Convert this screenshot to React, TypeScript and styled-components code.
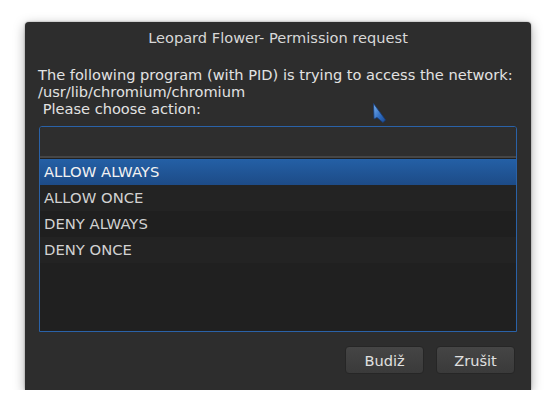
import React from "react";
import styled, { createGlobalStyle } from "styled-components";

const GlobalStyle = createGlobalStyle`
  html, body { margin: 0; padding: 0; background: #ffffff; }
  body { font-family: "DejaVu Sans", "Liberation Sans", sans-serif; }
`;

const Page = styled.div`
  padding: 22px 0 0 25px;
  position: relative;
`;

const Dialog = styled.div`
  width: 506px;
  height: 368px;
  box-sizing: border-box;
  background: #2d2d2d;
  border-radius: 4px 4px 0 0;
  box-shadow: 0 3px 12px rgba(0, 0, 0, 0.35), 0 0 2px rgba(0, 0, 0, 0.4);
  display: flex;
  flex-direction: column;
  font-size: 14.6px;
  color: #dedede;
`;

const Title = styled.div`
  text-align: center;
  line-height: 18px;
  padding-top: 7px;
  color: #d8d8d8;
`;

const Message = styled.div`
  margin-top: 19px;
  padding: 0 13px;
  line-height: 17px;
  white-space: pre;
  color: #e2e2e2;
`;

const ListBox = styled.div`
  margin: 9px 14px 0 14px;
  height: 206px;
  box-sizing: border-box;
  border: 1px solid #2a62a8;
  border-radius: 3px 3px 0 0;
  background: #202020;
  overflow: hidden;
`;

const Header = styled.div`
  height: 29px;
  background: #2e2e2e;
  border-bottom: 2px solid #464646;
`;

const Row = styled.div<{ $selected?: boolean; $alt?: boolean }>`
  height: 26px;
  line-height: 26px;
  padding-left: 4px;
  font-size: 14.8px;
  color: ${(p) => (p.$selected ? "#f2f2f2" : "#d2d2d2")};
  background: ${(p) =>
    p.$selected
      ? "linear-gradient(#2460a6, #1d4b87)"
      : p.$alt
      ? "#1f1f1f"
      : "#232323"};
`;

const RowList = styled.div`
  padding-top: 1px;
`;

const ButtonBar = styled.div`
  display: flex;
  justify-content: flex-end;
  gap: 12px;
  padding: 14px 16px 0 0;
`;

const Button = styled.button`
  width: 79px;
  height: 28px;
  box-sizing: border-box;
  border: 1px solid #262626;
  border-radius: 4px;
  background: linear-gradient(#454545, #3a3a3a);
  color: #e0e0e0;
  font-family: "DejaVu Sans", "Liberation Sans", sans-serif;
  font-size: 14.6px;
  padding: 0;
`;

const Cursor = styled.svg`
  position: absolute;
  left: 372px;
  top: 102px;
`;

const items = ["ALLOW ALWAYS", "ALLOW ONCE", "DENY ALWAYS", "DENY ONCE"];

export default function App() {
  return (
    <>
      <GlobalStyle />
      <Page>
        <Dialog>
          <Title>Leopard Flower- Permission request</Title>
          <Message>
            {"The following program (with PID) is trying to access the network:\n/usr/lib/chromium/chromium\n Please choose action:"}
          </Message>
          <ListBox>
            <Header />
            <RowList>
              {items.map((t, i) => (
                <Row key={t} $selected={i === 0} $alt={i % 2 === 0}>
                  {t}
                </Row>
              ))}
            </RowList>
          </ListBox>
          <ButtonBar>
            <Button>Budiž</Button>
            <Button>Zrušit</Button>
          </ButtonBar>
        </Dialog>
        <Cursor width="16" height="22" viewBox="0 0 16 22">
          <defs>
            <linearGradient id="cg" x1="0" y1="0" x2="1" y2="1">
              <stop offset="0" stopColor="#7ab2f0" />
              <stop offset="0.6" stopColor="#2f6cc0" />
              <stop offset="1" stopColor="#1a4a92" />
            </linearGradient>
          </defs>
          <path d="M1.5 1.5 L2 17 L5 15.5 L11 20.5 L13.5 18 Q13 17 12.5 16.5 Z" fill="url(#cg)" stroke="#163c78" strokeWidth="0.8" strokeLinejoin="round" />
        </Cursor>
      </Page>
    </>
  );
}
